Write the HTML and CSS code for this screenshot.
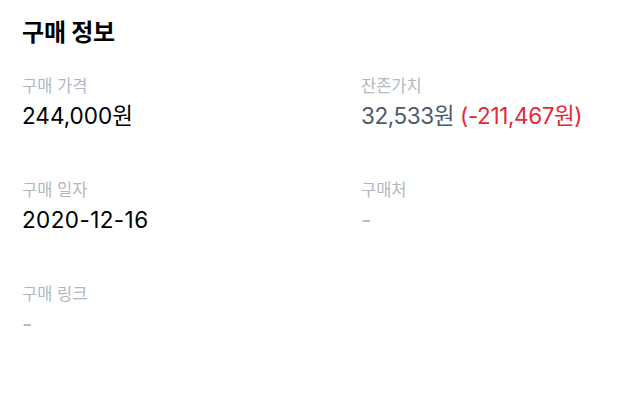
FILE: index.html
```html
<!DOCTYPE html>
<html lang="ko">
<head>
<meta charset="utf-8">
<title>구매 정보</title>
<link rel="stylesheet" href="styles.css">
</head>
<body>
<section class="purchase">
  <h2 class="purchase__title">구매 정보</h2>
  <dl class="info-grid">
    <div class="info">
      <dt class="info__label">구매 가격</dt>
      <dd class="info__value">244,000원</dd>
    </div>
    <div class="info">
      <dt class="info__label">잔존가치</dt>
      <dd class="info__value info__value--muted">32,533원 <span class="info__loss">(-211,467원)</span></dd>
    </div>
    <div class="info">
      <dt class="info__label">구매 일자</dt>
      <dd class="info__value info__value--date">2020-12-16</dd>
    </div>
    <div class="info">
      <dt class="info__label">구매처</dt>
      <dd class="info__value info__value--empty">-</dd>
    </div>
    <div class="info">
      <dt class="info__label">구매 링크</dt>
      <dd class="info__value info__value--empty">-</dd>
    </div>
  </dl>
</section>
</body>
</html>
```
FILE: styles.css
```css
html, body {
  margin: 0;
  padding: 0;
  background: #ffffff;
}

body {
  font-family: Inter, "Noto Sans CJK KR", sans-serif;
  color: #191f28;
}

.purchase {
  padding: 17px 22px;
}

.purchase__title {
  margin: 0;
  font-size: 24px;
  line-height: 32px;
  font-weight: 700;
  letter-spacing: -0.2px;
  color: #000000;
}

.info-grid {
  margin: 25px 0 0;
  display: grid;
  grid-template-columns: 339px 1fr;
  row-gap: 47px;
}

.info {
  display: flex;
  flex-direction: column;
  gap: 3px;
}

.info__label {
  font-size: 16.5px;
  line-height: 24px;
  color: #b0b8c1;
}

.info__value {
  margin: 0;
  font-size: 22.5px;
  line-height: 30px;
  color: #000000;
}

.info__value--muted {
  color: #4e5968;
  letter-spacing: -0.4px;
}

.info__value--date {
  letter-spacing: 0.4px;
}

.info__loss {
  color: #e42939;
}

.info__value--empty {
  color: #b0b8c1;
}
```
